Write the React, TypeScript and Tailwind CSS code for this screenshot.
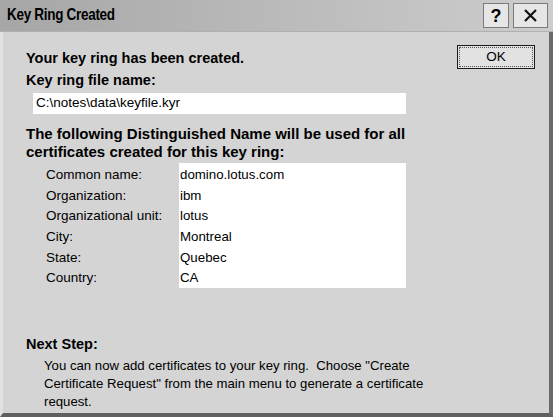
import React from "react";

const rows: [string, string][] = [
  ["Common name:", "domino.lotus.com"],
  ["Organization:", "ibm"],
  ["Organizational unit:", "lotus"],
  ["City:", "Montreal"],
  ["State:", "Quebec"],
  ["Country:", "CA"],
];

export default function App() {
  return (
    <div
      className="w-[553px] h-[417px] bg-[#d4d4d4] flex flex-col overflow-hidden text-black"
      style={{ fontFamily: '"Liberation Sans", Arial, sans-serif' }}
    >
      <div className="h-[32px] shrink-0 flex items-center justify-between pl-[7px] pr-[5px] bg-gradient-to-r from-[#a6a6a6] via-[#bababa] to-[#cdcdcd] border-b border-[#b0b0b0]">
        <span className="font-bold text-[13.5px] tracking-[-0.3px] scale-y-125 origin-left">Key Ring Created</span>
        <div className="flex gap-[4px]">
          <div className="w-[26px] h-[25px] bg-[#e6e6e6] border border-[#7a7a7a] flex items-center justify-center text-[18px] font-bold leading-none">?</div>
          <div className="w-[35px] h-[25px] bg-[#e6e6e6] border border-[#7a7a7a] flex items-center justify-center">
            <svg width="15" height="15" viewBox="0 0 15 15"><path d="M2 2 L13 13 M13 2 L2 13" stroke="#111" strokeWidth="2.2" /></svg>
          </div>
        </div>
      </div>
      <div className="flex-1 flex border-l-[3px] border-l-[#e2e2e2] border-r-[4px] border-r-[#6a6a6a] border-b-[4px] border-b-[#5f5f5f] relative">
        <div className="flex-1 pl-[23px] pt-[17px] relative">
          <div className="font-bold text-[14.5px] leading-[18px]">Your key ring has been created.</div>
          <div className="font-bold text-[14.5px] leading-[18px] mt-[4px]">Key ring file name:</div>
          <div className="ml-[7px] mt-[4px] w-[373px] h-[21px] bg-white flex items-center pl-[3px] text-[13.5px]">C:\notes\data\keyfile.kyr</div>
          <div className="font-bold text-[15px] leading-[18px] mt-[11px]">The following Distinguished Name will be used for all<br />certificates created for this key ring:</div>
          <div className="flex mt-[2px]">
            <div className="w-[153px] pl-[20px] pt-[2px] flex flex-col text-[13.5px]">
              {rows.map(([l]) => (
                <div key={l} className="h-[20.7px] leading-[20px] shrink-0">{l}</div>
              ))}
            </div>
            <div className="w-[227px] h-[125px] bg-white pl-[1px] pt-[2px] flex flex-col text-[13.3px]">
              {rows.map(([l, v]) => (
                <div key={l} className="h-[20.7px] leading-[20px] shrink-0">{v}</div>
              ))}
            </div>
          </div>
          <div className="font-bold text-[14.5px] leading-[18px] mt-[46px]">Next Step:</div>
          <div className="ml-[18px] mt-[4px] text-[13.2px] leading-[18px] w-[440px]">
            You can now add certificates to your key ring.&nbsp; Choose "Create<br />Certificate Request" from the main menu to generate a certificate<br />request.
          </div>
          <div className="absolute right-[14px] top-[13px] w-[78px] h-[24px] border border-[#1a1a1a] bg-[#e2e2e2] flex items-center justify-center p-[1px]">
            <div className="w-full h-full border border-dotted border-[#555] flex items-center justify-center text-[13.5px]">OK</div>
          </div>
        </div>
      </div>
    </div>
  );
}
